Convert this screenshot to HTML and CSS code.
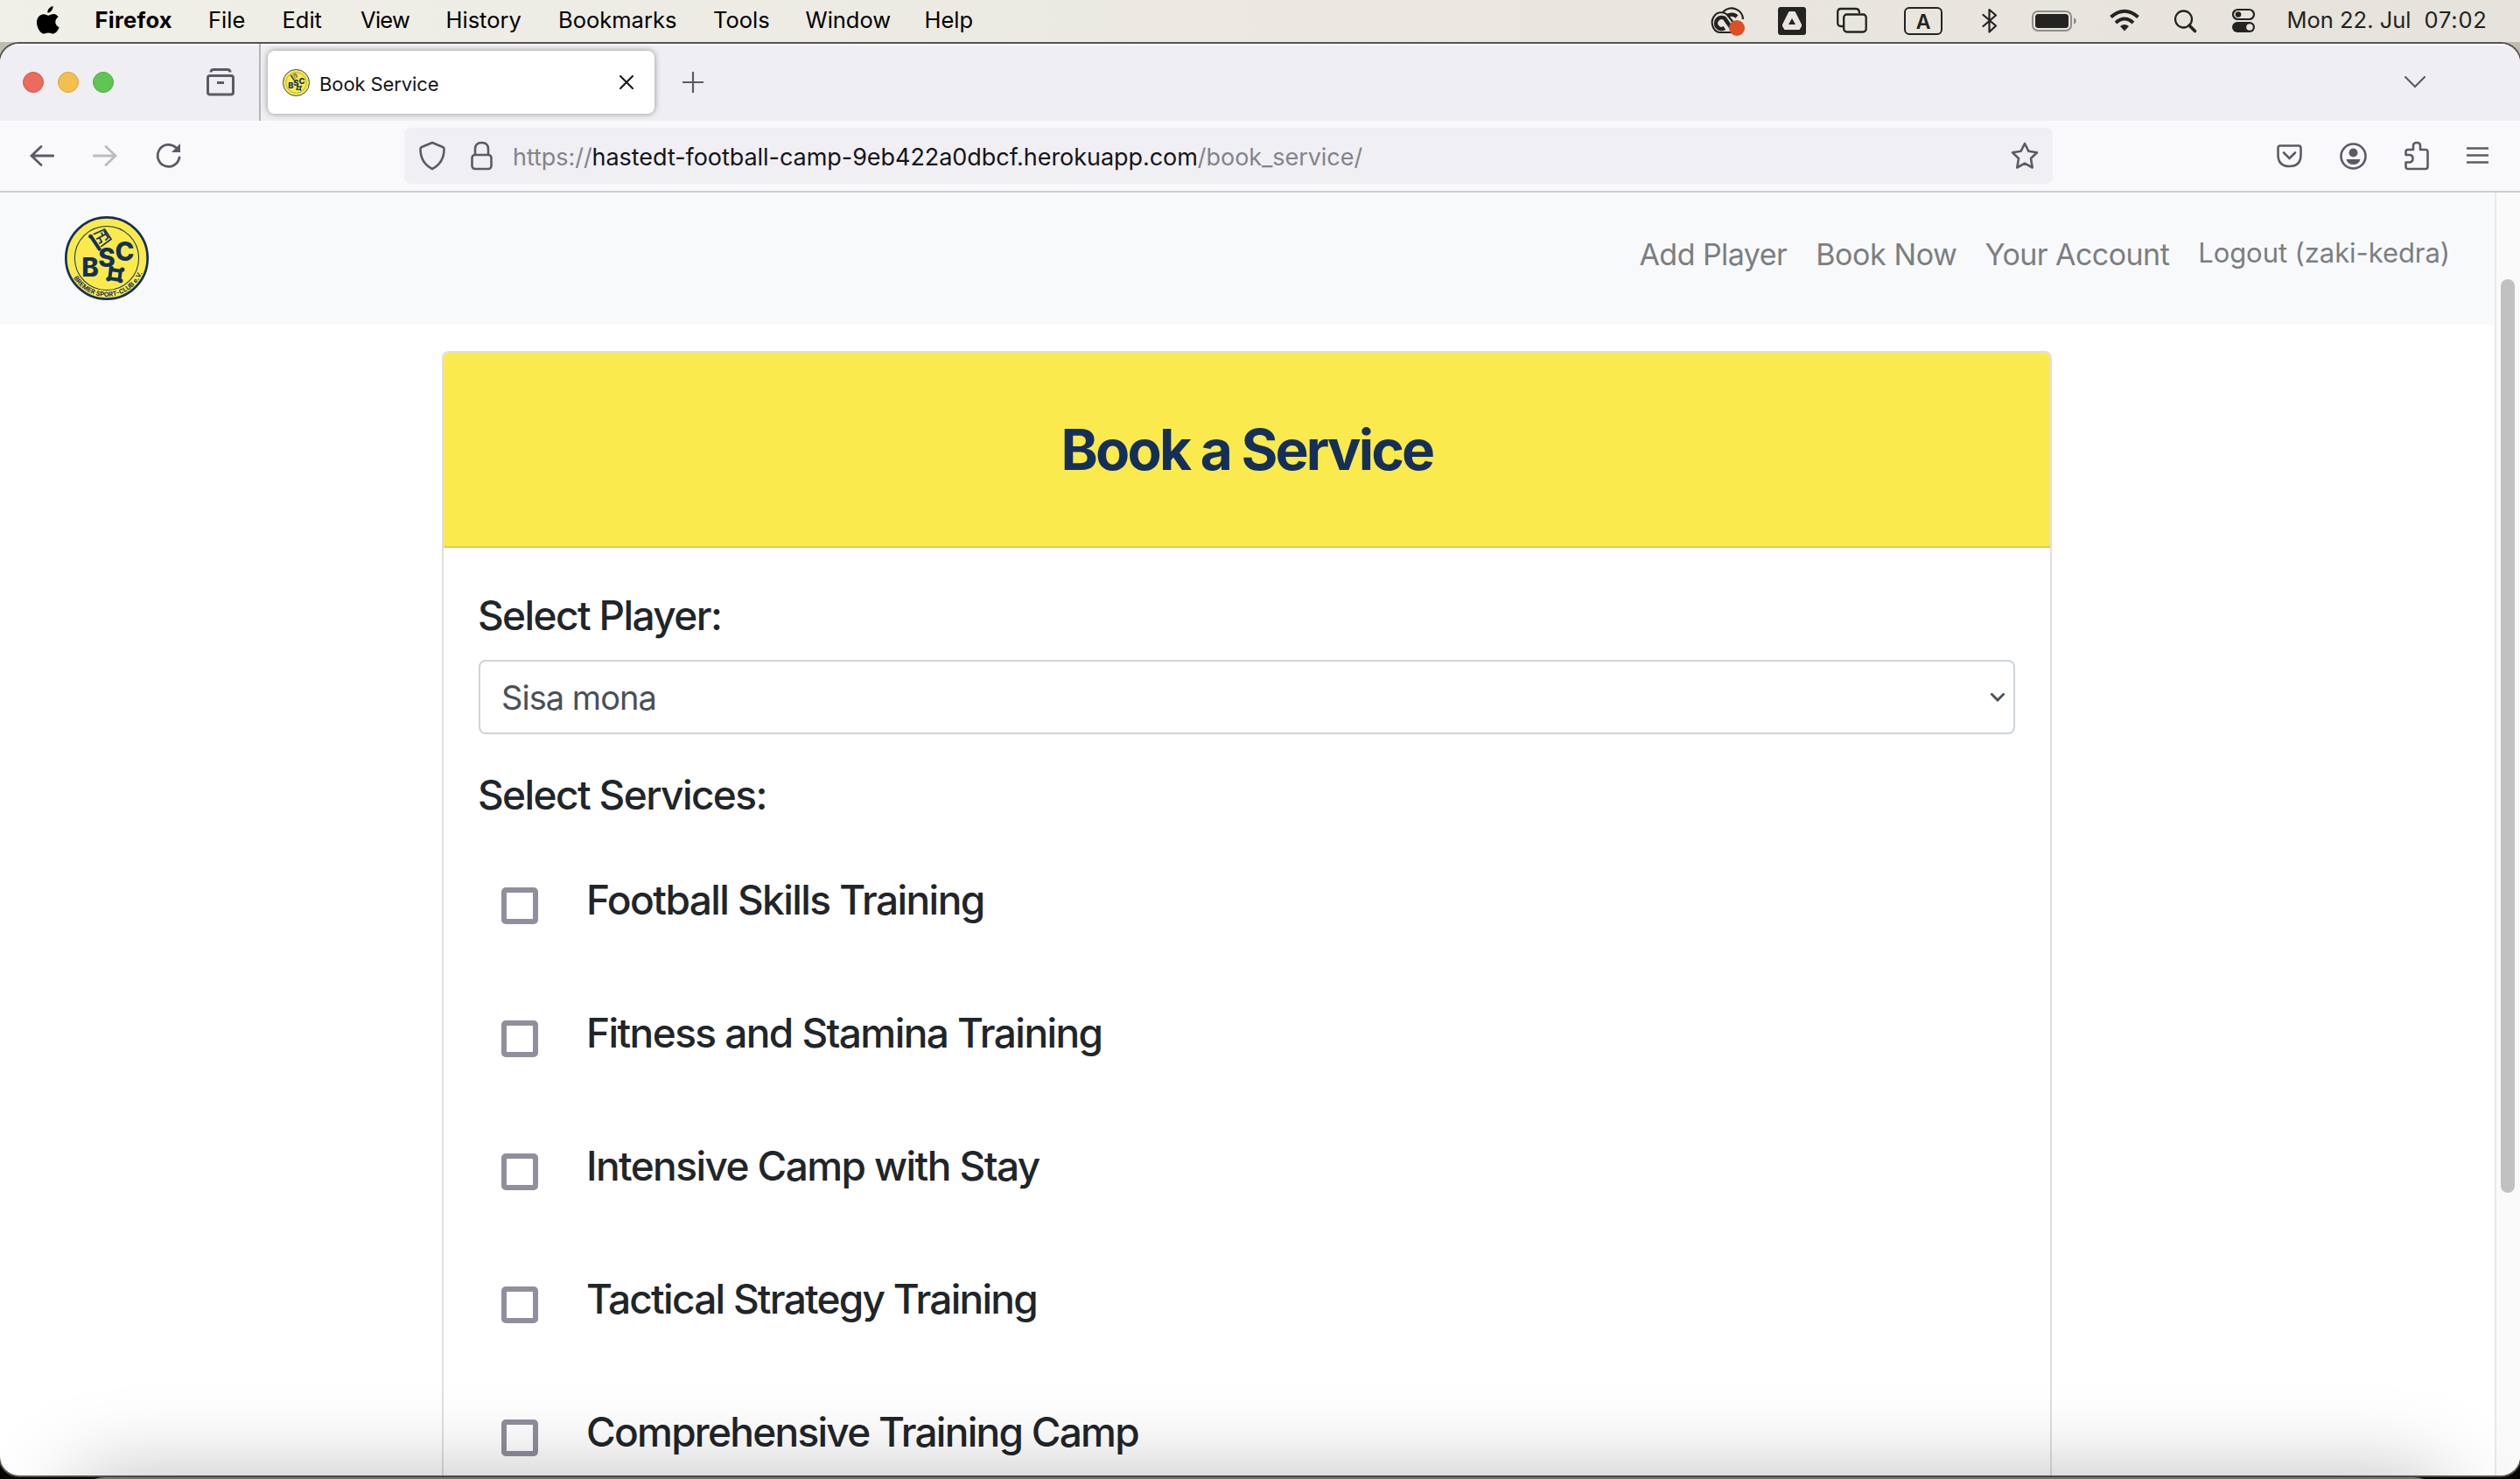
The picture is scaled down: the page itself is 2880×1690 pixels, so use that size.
FILE: index.html
```html
<!DOCTYPE html>
<html lang="en">
<head>
<meta charset="utf-8">
<title>Book Service</title>
<link rel="stylesheet" href="styles.css">
</head>
<body>
<svg class="defs" width="0" height="0" aria-hidden="true">
  <symbol id="crest-shape" viewBox="0 0 286 286">
    <circle cx="143" cy="143" r="139" fill="#fbea4d" stroke="#14305a" stroke-width="8"/>
    <circle cx="143" cy="143" r="109" fill="none" stroke="#14305a" stroke-width="3"/>
    <g fill="none" stroke="#14305a">
      <path d="M90 70L118 112" stroke-width="12" stroke-linecap="round"/>
      <path d="M98 62L136 45L158 78L123 104M108 78L140 61M117 93L126 88L118 73M133 50L148 73L138 82M124 56L129 64" stroke-width="5"/>
      <path d="M157 182L190 187L186 217L153 212Z" stroke-width="12"/>
    </g>
    <g fill="#14305a">
      <circle cx="88" cy="69" r="7"/>
      <circle cx="159" cy="178" r="8"/><circle cx="196" cy="182" r="8"/><circle cx="190" cy="220" r="8"/><circle cx="149" cy="214" r="8"/>
    </g>
  </symbol>
</svg>

<header class="menubar">
  <nav class="menus">
    <svg class="apple" width="28" height="34" viewBox="0 0 28 34"><path fill="#000" d="M19.6 0C19.8 3.6 16.8 7.600 13.300 7.600C13 4 16 .6 19.600 0ZM25.600 12.500C20.700 15.500 21.500 22 26.600 24.200C25.500 27.500 22.600 31.500 19.800 31.500C17.700 31.500 17 30.400 14.300 30.400C11.600 30.400 10.700 31.500 8.900 31.500C5.200 31.500 1 24.500 1 18.800C1 12.800 4.800 9.200 8.900 9.200C11.200 9.200 12.900 10.700 14.500 10.700C16 10.700 17.900 9.100 20.600 9.100C22.500 9.100 24.500 10.400 25.600 12.500Z"/></svg>
    <strong class="app-name">Firefox</strong><span>File</span><span>Edit</span><span class="view">View</span><span>History</span><span>Bookmarks</span><span>Tools</span><span>Window</span><span>Help</span>
  </nav>
  <div class="status">
    <svg width="44" height="48" viewBox="0 0 44 48" fill="none" stroke="#232321" stroke-width="2.200"><path d="M31 37H11A10.500 11.500 0 1 1 22 19.500L31 31M15 14A13 12.500 0 0 1 38 22"/><path d="M17 32A6.500 6.500 0 1 1 17 21L26 34M20 18A9 8 0 0 1 31 19" stroke-width="4.500"/><circle cx="31" cy="32" r="9" fill="#dd4f24" stroke="none"/></svg>
    <svg width="34" height="48" viewBox="0 0 34 48"><rect y="8" width="32" height="32" rx="3" fill="#232321"/><path fill="#e8e6e0" d="M12 14Q12.500 13 13.500 13H18.500Q19.500 13 20 14L27 28V30L24.500 34H7.500L5 30V28Z"/><path fill="#232321" d="M16 21L20 28H12Z"/></svg>
    <svg width="36" height="48" viewBox="0 0 36 48" fill="none" stroke="#232321" stroke-width="2.300"><path d="M8 30H5Q1.200 30 1.200 26V14Q1.200 10 5 10H22Q26 10 26 15"/><rect x="8.200" y="16.500" width="25.500" height="20" rx="3.500"/></svg>
    <svg width="46" height="48" viewBox="0 0 46 48"><rect x="1" y="9" width="42" height="30" rx="5" fill="none" stroke="#232321" stroke-width="2"/><text class="input-source" x="22" y="33" text-anchor="middle">A</text></svg>
    <svg width="20" height="48" viewBox="0 0 20 48" fill="none" stroke="#232321" stroke-width="2.200" stroke-linejoin="round" stroke-linecap="round"><path d="M1.500 17L16 29.500L8.500 36.500V11L16 17.500L1.500 30"/></svg>
    <svg width="54" height="48" viewBox="0 0 54 48"><rect x="1" y="13" width="44" height="22" rx="6" fill="none" stroke="#8f8e89" stroke-width="2"/><rect x="4" y="16" width="38" height="16" rx="3.500" fill="#232321"/><path d="M48 20Q51 21.500 51 24Q51 26.500 48 28Z" fill="#8f8e89"/></svg>
    <svg width="36" height="48" viewBox="0 0 36 48" fill="none" stroke="#232321" stroke-width="4"><path d="M1.500 19.500Q17 6 32.500 19.500M7 26Q17 17 27 26"/><path d="M12 30Q17 26 22 30L17 35.500Z" fill="#232321" stroke="none"/></svg>
    <svg width="28" height="48" viewBox="0 0 28 48" fill="none" stroke="#232321"><circle cx="10.500" cy="22" r="9.500" stroke-width="2.300"/><path d="M17 29L23.500 35.500" stroke-width="3.600" stroke-linecap="round"/></svg>
    <svg width="28" height="48" viewBox="0 0 28 48"><rect x="1" y="11" width="24" height="11" rx="5.500" fill="none" stroke="#232321" stroke-width="2.200"/><circle cx="7" cy="16.500" r="3.300" fill="#232321"/><rect y="25" width="26" height="12" rx="6" fill="#232321"/><circle cx="20" cy="31" r="3.800" fill="#e6e4dd"/></svg>
    <span class="clock"><span>Mon 22. Jul</span><span class="time">07:02</span></span>
  </div>
</header>

<main class="window">
  <div class="tabstrip">
    <div class="lights"><i class="red"></i><i class="amber"></i><i class="green"></i></div>
    <svg class="recent" width="32" height="32" viewBox="0 0 32 32" fill="none" stroke="#5b5b66" stroke-width="3"><path d="M5 4.500Q5 1.500 8 1.500H24Q27 1.500 27 4.500"/><rect x="1.500" y="8.500" width="29" height="21.500" rx="2.500"/><path d="M12 16.500H20"/></svg>
    <div class="tab">
      <svg class="favicon" width="31" height="31" viewBox="0 0 286 286">
        <use href="#crest-shape"/>
        <text class="crest-letter" x="57" y="205">B</text>
        <text class="crest-letter" x="114" y="174">S</text>
        <text class="crest-letter" x="171" y="153">C</text>
      </svg>
      <span class="tab-title">Book Service</span>
      <svg width="16" height="16" viewBox="0 0 16 16" stroke="#15141a" stroke-width="2" stroke-linecap="round"><path d="M1 1L15 15M15 1L1 15"/></svg>
    </div>
    <svg class="plus" width="24" height="24" viewBox="0 0 24 24" stroke="#5b5b66" stroke-width="2.200"><path d="M0 12H24M12 0V24"/></svg>
    <svg class="all-tabs" width="24" height="14" viewBox="0 0 24 14" fill="none" stroke="#5b5b66" stroke-width="2.200" stroke-linecap="round"><path d="M1 1L12 12L23 1"/></svg>
  </div>

  <div class="toolbar">
    <div class="history">
      <svg width="28" height="24" viewBox="0 0 28 24" fill="none" stroke="#5b5b66" stroke-width="2.800" stroke-linecap="round"><path d="M13 1.500L2 12L13 22.500M2 12H27"/></svg>
      <svg width="28" height="24" viewBox="0 0 28 24" fill="none" stroke="#bcbcc0" stroke-width="2.800" stroke-linecap="round"><path d="M15 1.500L26 12L15 22.500M26 12H1"/></svg>
      <svg width="30" height="30" viewBox="0 0 30 30" fill="none" stroke="#5b5b66" stroke-width="2.800" stroke-linecap="round"><path d="M27 17A12.500 12.500 0 1 1 23 5.500"/><path d="M28 1V11H18Z" fill="#5b5b66" stroke="none"/></svg>
    </div>
    <div class="urlbar">
      <svg width="30" height="34" viewBox="0 0 30 34" fill="none" stroke="#5b5b66" stroke-width="2.600" stroke-linejoin="round"><path d="M15 2L27 7Q28.500 7.500 28.500 9.500Q28.500 25 15 32Q1.500 25 1.500 9.500Q1.500 7.500 3 7Z"/></svg>
      <svg class="lock" width="25" height="34" viewBox="0 0 25 34" fill="none" stroke="#5b5b66" stroke-width="2.600"><rect x="1.500" y="16" width="22" height="16" rx="3.500"/><path d="M5 16V9.500Q5 2 12.500 2Q20 2 20 9.500V16"/></svg>
      <span class="url"><span class="dim">https://</span>hastedt-football-camp-9eb422a0dbcf.herokuapp.com<span class="dim">/book_service/</span></span>
      <svg width="32" height="32" viewBox="0 0 32 32" fill="none" stroke="#5b5b66" stroke-width="2.600" stroke-linejoin="round"><path d="M16 2L20.300 10.700L30 12.200L23 19L24.700 29.500L16 24.700L7.300 29.500L9 19L2 12.200L11.700 10.700Z"/></svg>
    </div>
    <div class="actions">
      <svg width="29" height="27" viewBox="0 0 29 27" fill="none" stroke="#5b5b66" stroke-width="2.600" stroke-linecap="round"><path d="M4 1.500H25Q27.500 1.500 27.500 4V12Q27.500 25 14.500 25Q1.500 25 1.500 12V4Q1.500 1.500 4 1.500ZM8 9.500L14.500 16L21 9.500"/></svg>
      <svg width="31" height="31" viewBox="0 0 31 31"><circle cx="15.500" cy="15.500" r="14" fill="none" stroke="#5b5b66" stroke-width="2.600"/><circle cx="15.500" cy="11.500" r="5" fill="#5b5b66"/><path d="M7.500 19H23.500Q22 25 15.500 25Q9 25 7.500 19Z" fill="#5b5b66"/></svg>
      <svg width="28" height="34" viewBox="0 0 28 34" fill="none" stroke="#5b5b66" stroke-width="2.600" stroke-linejoin="round"><path d="M10 9.500V5.500Q10 2 14 2Q18 2 18 5.500V10H24Q26.500 10 26.500 12.500V29.500Q26.500 32 24 32H4Q1.500 32 1.500 29.500V24.500H5Q9.500 24.500 9.500 20Q9.500 16 5 16H1.500V12.500Q1.500 10 4 10H10Z"/></svg>
      <svg width="25" height="20" viewBox="0 0 25 20" stroke="#5b5b66" stroke-width="2.400"><path d="M0 1.500H25M0 9.500H25M0 17.500H25"/></svg>
    </div>
  </div>

  <div class="viewport">
    <div class="page">
      <nav class="navbar">
        <svg class="brand" width="96" height="96" viewBox="0 0 286 286">
          <use href="#crest-shape"/>
          <text class="crest-letter" x="57" y="205">B</text>
          <text class="crest-letter" x="114" y="174">S</text>
          <text class="crest-letter" x="171" y="153">C</text>
          <path id="crest-arc" d="M12 143A131 131 0 0 0 274 143" fill="none"/>
          <text class="crest-motto"><textPath href="#crest-arc" startOffset="70" textLength="290">BREMER SPORT-CLUB e.V.</textPath></text>
        </svg>
        <div class="links">
          <a>Add Player</a><a class="now">Book Now</a><a>Your Account</a><a class="logout">Logout (zaki-kedra)</a>
        </div>
      </nav>
      <section class="card">
        <h1 class="card-header">Book a Service</h1>
        <form class="card-body">
          <label class="label">Select Player:</label>
          <div class="select"><span>Sisa mona</span>
            <svg width="18" height="12" viewBox="0 0 18 12" fill="none" stroke="#495057" stroke-width="2.800"><path d="M1.500 1.500L9 9L16.500 1.500"/></svg>
          </div>
          <label class="label services-label">Select Services:</label>
          <ul class="services">
            <li><i class="box"></i><span>Football Skills Training</span></li>
            <li><i class="box"></i><span>Fitness and Stamina Training</span></li>
            <li><i class="box"></i><span>Intensive Camp with Stay</span></li>
            <li class="snug"><i class="box"></i><span>Tactical Strategy Training</span></li>
            <li class="snug"><i class="box"></i><span>Comprehensive Training Camp</span></li>
          </ul>
        </form>
      </section>
    </div>
    <div class="scrollbar"><div class="thumb"></div></div>
  </div>
</main>
<div class="overlay"><div class="dock"></div></div>
</body>
</html>
```
FILE: styles.css
```css
* { box-sizing: border-box; }

html { height: 1690px; overflow: hidden; }
body {
  margin: 0;
  width: 2880px;
  height: 1690px;
  overflow: hidden;
  position: relative;
  background: linear-gradient(#c9c6ba 0, #b5b2a6 100px, #050602 400px);
  font-family: Inter, "Liberation Sans", sans-serif;
  color: #212529;
}

svg { display: block; flex: none; }
.defs { position: absolute; }

/* club crest lettering */
.crest-letter { font: 800 88px Inter, sans-serif; fill: #14305a; }
.crest-motto { font: 700 22px Inter, sans-serif; fill: #14305a; }

/* system menu bar */
.menubar {
  height: 48px;
  display: flex;
  justify-content: space-between;
  background: linear-gradient(90deg, #f0efe8, #eae8e1 50%, #e5e3dc);
  color: #000;
  font-size: 25.5px;
  line-height: 45px;
  white-space: nowrap;
}
.menus {
  display: grid;
  grid-template-columns: 67px 129.5px 84.500px 89.500px 97.500px 128.500px 177px 105.500px 136px auto;
  padding-left: 41.5px;
}
.apple { margin: 7px 0 0 -1px; }
.app-name { letter-spacing: 0.3px; }
.view { letter-spacing: -0.7px; }
.status {
  width: 926px;
  display: grid;
  grid-template-columns: 78px 67px 77px 89px 57px 89px 74px 66px 62.500px auto;
  color: #232321;
}
.input-source { font-size: 23px; font-weight: 600; fill: #232321; }
.clock { display: flex; gap: 15px; }
.time { letter-spacing: 0.8px; }

/* browser window */
.window {
  height: 1636px;
  margin-top: 2px;
  border-radius: 22px;
  overflow: hidden;
  box-shadow: 0 0 0 2px #55554c;
  background: #fff;
}
.tabstrip {
  height: 88px;
  padding-bottom: 2px;
  display: flex;
  align-items: center;
  background: #efeef3;
  border-top: 2px solid #f9f9fb;
}
.lights { display: flex; gap: 16px; padding-left: 26px; }
.lights i { width: 24px; height: 24px; border-radius: 50%; }
.red { background: #ec6a5e; border: 1px solid #d5584c; }
.amber { background: #f4bf4f; border: 1px solid #d9a53e; }
.green { background: #61c554; border: 1px solid #50a945; }
.recent { margin-left: 106px; }
.tab {
  width: 442px;
  height: 72px;
  margin-left: 38px;
  padding: 0 24px 0 17px;
  display: flex;
  align-items: center;
  background: #fff;
  border-radius: 8px;
  box-shadow: 0 0 7px rgba(0, 0, 0, .4);
  position: relative;
}
.tab::before {
  content: "";
  position: absolute;
  left: -10px;
  top: -8px;
  width: 2px;
  height: 88px;
  background: #b4b4ba;
}
.tab-title {
  flex: 1;
  padding: 3px 0 0 11px;
  font-size: 22px;
  letter-spacing: -0.1px;
  color: #15141a;
}
.plus { margin-left: 32px; }
.all-tabs { margin-left: auto; margin-right: 108px; }

.toolbar {
  height: 82px;
  display: flex;
  align-items: center;
  background: #f9f9fb;
  border-bottom: 2px solid #cccccf;
}
.history { width: 462px; padding-left: 34px; display: flex; align-items: center; gap: 44px; }
.urlbar {
  width: 1884px;
  height: 64px;
  padding: 0 16px 0 17px;
  display: flex;
  align-items: center;
  background: #f0eff4;
  border-radius: 8px;
}
.lock { margin-left: 29px; }
.url { flex: 1; padding: 2px 0 0 23px; font-size: 27px; letter-spacing: -0.05px; color: #15141a; }
.dim { color: #84838a; }
.actions { flex: 1; padding: 0 36px 0 256px; display: flex; align-items: center; justify-content: space-between; }

/* page content */
.viewport { height: 1466px; display: flex; }
.page { width: 2851px; display: flex; flex-direction: column; }
.navbar {
  height: 151px;
  flex: none;
  padding: 27px 51px 0 74px;
  display: flex;
  justify-content: space-between;
  background: #f8f9fb;
}
.links {
  padding-top: 24px;
  display: flex;
  gap: 33px;
  font-size: 34px;
  line-height: 40px;
  letter-spacing: -0.55px;
  color: #7d7e7f;
}
.now { letter-spacing: -0.4px; margin-right: -1px; }
.logout { margin-top: -2px; font-size: 31px; letter-spacing: -0.08px; }

.card {
  width: 1840px;
  flex: 1;
  margin: 30px 0 0 505px;
  border: 2px solid #dfdfdf;
  border-bottom: 0;
  border-radius: 8px 8px 0 0;
}
.card-header {
  height: 223px;
  margin: 0;
  display: flex;
  align-items: center;
  justify-content: center;
  background: #fbea4d;
  border-bottom: 2px solid #decf46;
  border-radius: 6px 6px 0 0;
  font-size: 64px;
  font-weight: 700;
  letter-spacing: -2.8px;
  color: #14305a;
}
.card-body { padding: 48px 40px 0; }
.label {
  display: block;
  margin-left: -1px;
  font-size: 46px;
  font-weight: 500;
  line-height: 58px;
  letter-spacing: -1.6px;
}
.select {
  height: 85px;
  margin-top: 22px;
  padding: 0 9px 0 24px;
  display: flex;
  align-items: center;
  justify-content: space-between;
  border: 2px solid #ced4da;
  border-radius: 8px;
  font-size: 38px;
  letter-spacing: -0.97px;
  color: #495057;
}
.services-label { margin-top: 40px; }
.services { list-style: none; margin: 62px 0 0; padding: 0 0 0 26px; }
.services li {
  height: 152px;
  display: flex;
  align-items: flex-start;
  gap: 55px;
  font-size: 46px;
  font-weight: 500;
  line-height: 58px;
  letter-spacing: -1.58px;
}
.services li.snug { letter-spacing: -1.74px; }
.services li:last-child { height: 78px; }
.box {
  width: 42px;
  height: 42px;
  margin-top: 15px;
  border: 6px solid #8f8f9d;
  border-radius: 5px;
  background: #fff;
}

.scrollbar { flex: 1; padding: 99px 6px 0 5px; background: #fafafa; border-left: 2px solid #e8e8e8; }
.thumb { width: 16px; height: 1044px; border-radius: 8px; background: #c1c1c1; }

/* top edge of the dock, casting its shadow over the window */
.overlay {
  position: absolute;
  inset: 0;
  overflow: hidden;
  pointer-events: none;
}
.dock {
  height: 120px;
  margin: 1688px 82px -118px 80px;
  border-radius: 40px;
  background: #75766b;
  box-shadow: 0 0 100px rgba(0, 0, 0, .27);
}
```
